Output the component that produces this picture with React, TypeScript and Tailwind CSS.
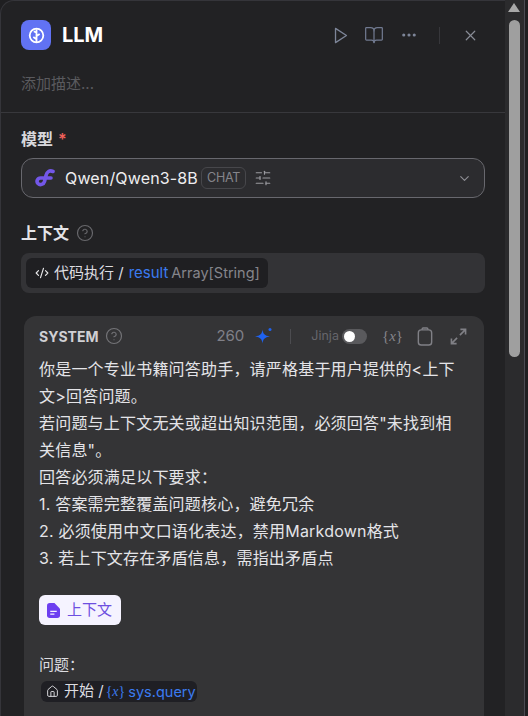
import React from "react";
import { BookOpen, Ellipsis, X, ChevronDown, SlidersHorizontal, CodeXml, House, CircleHelp } from "lucide-react";

const FONT = "font-['Inter','Noto_Sans_CJK_SC',sans-serif]";

function Help({ cls }: { cls: string }) {
  return <CircleHelp className={cls} strokeWidth={1.6} />;
}

function Sparkle() {
  return (
    <svg viewBox="0 0 18 18" className="h-[18px] w-[18px]" fill="#1f62f0">
      <path d="M7.5 2.5 C8 7 9.5 8.6 15 9.5 C9.5 10.4 8 12 7.5 16.5 C7 12 5.5 10.4 0 9.5 C5.5 8.6 7 7 7.5 2.5Z" />
      <circle cx="15" cy="2.5" r="1.5" />
    </svg>
  );
}

function VarIcon({ cls }: { cls: string }) {
  return (
    <span className={cls}>
      {"{"}
      <i>x</i>
      {"}"}
    </span>
  );
}

export default function App() {
  return (
    <div className={`flex h-[716px] w-[528px] overflow-hidden bg-[#1f1f21] ${FONT}`}>
      <div className="h-full w-[505px] shrink-0 overflow-hidden rounded-tl-[14px] border-l border-t border-[#35353a] bg-[#222224]">
        <div className="flex h-[68px] items-center pl-[20px] pr-[26px]">
          <div className="flex h-[30px] w-[30px] items-center justify-center rounded-[8px] bg-[#6172f3]">
            <svg viewBox="0 0 16 16" className="h-[17px] w-[17px]" fill="none" stroke="#fff" strokeWidth="1.7">
              <circle cx="8" cy="8" r="6.4" />
              <path d="M8 2v12M8 5.5 5.5 4M8 8.5 11 6.5M8 11.5 5 9.5" />
            </svg>
          </div>
          <div className="ml-[11px] text-[20px] font-bold text-white">LLM</div>
          <div className="ml-auto flex items-center text-[#7d8598]">
            <svg viewBox="0 0 14 18" className="h-[17px] w-[14px]" fill="none" stroke="currentColor" strokeWidth="1.4" strokeLinejoin="round">
              <path d="M1.2 1.5 12.8 9 1.2 16.5Z" />
            </svg>
            <BookOpen className="ml-[16px] h-[20px] w-[20px] text-[#70798f]" strokeWidth={1.5} />
            <Ellipsis className="ml-[16px] h-[18px] w-[18px]" strokeWidth={2.2} />
            <div className="ml-[21px] h-[17px] w-px bg-[#37373b]" />
            <X className="ml-[22px] h-[17px] w-[17px] text-[#888c96]" strokeWidth={1.7} />
          </div>
        </div>
        <div className="flex h-[43px] items-start pl-[20px] pt-[4px] text-[15px] leading-[22px] text-[#5a5a5e]">添加描述...</div>
        <div className="h-px bg-[#38383c]" />

        <div className="px-[20px]">
          <div className="mt-[15px] flex h-[22px] items-center text-[16px] font-semibold leading-[22px] text-[#d8d8dc]">
            模型 <span className="ml-[5px] text-[#f0605a]">*</span>
          </div>
          <div className="mt-[8px] flex h-[40px] w-[464px] items-center rounded-[12px] border border-[#68686e] bg-[#2c2c2f] pl-[13px] pr-[12px]">
            <svg viewBox="0 0 20 20" className="h-[20px] w-[20px]" fill="none" stroke="#7357e8" strokeWidth="3.6" strokeLinecap="round">
              <path d="M18 3.5c-3.5-1.5-6 0-7 4l-1.5 6c-.8 3-4.5 4-6.5 2s-.5-5.5 2.5-5.5H16" />
            </svg>
            <span className="ml-[10px] text-[16px] tracking-[0.15px] text-[#eeeef0]">Qwen/Qwen3-8B</span>
            <span className="ml-[3px] flex h-[22px] items-center rounded-[6px] border border-[#47474b] px-[5px] text-[12.5px] tracking-[-0.2px] text-[#85858b]">CHAT</span>
            <SlidersHorizontal className="ml-[8px] h-[18px] w-[18px] text-[#9a9aa0]" strokeWidth={1.6} />
            <ChevronDown className="ml-auto h-[15px] w-[15px] text-[#8f8f95]" strokeWidth={1.8} />
          </div>

          <div className="mt-[24px] flex h-[22px] items-center text-[16px] font-semibold leading-[22px] text-[#e4e4e8]">
            上下文
            <Help cls="ml-[7px] h-[18px] w-[18px] text-[#68686c]" />
          </div>
          <div className="mt-[9px] flex h-[40px] w-[464px] items-center rounded-[8px] bg-[#333336] px-[5px]">
            <div className="flex h-[30px] items-center rounded-[6px] bg-[#1f1f22] pl-[9px] pr-[8px] text-[15px]">
              <CodeXml className="h-[14px] w-[14px] text-[#e8e8ea]" strokeWidth={2} />
              <span className="ml-[5px] text-[#dcdce0]">代码执行 /</span>
              <span className="ml-[5px] text-[#3b7bf0]">result</span>
              <span className="ml-[3px] text-[14.5px] text-[#85858b]">Array[String]</span>
            </div>
          </div>

          <div className="ml-[3px] mt-[23px] h-[400px] w-[460px] rounded-t-[12px] bg-[#343436] pl-[15px] pr-[17px] pt-[6px]">
            <div className="flex h-[28px] items-center">
              <span className="text-[14px] font-bold text-[#d0d0d4]">SYSTEM</span>
              <Help cls="ml-[7px] h-[18px] w-[18px] text-[#737377]" />
              <span className="ml-auto text-[15px] text-[#808088]">260</span>
              <span className="ml-[11px]"><Sparkle /></span>
              <span className="ml-[17px] h-[15px] w-px bg-[#4c4c50]" />
              <span className="ml-[20px] text-[12.5px] text-[#66666c]">Jinja</span>
              <span className="ml-[3px] flex h-[15px] w-[25px] items-center rounded-full bg-[#5a5a5d] pl-[2px]">
                <span className="h-[11px] w-[11px] rounded-full bg-white" />
              </span>
              <VarIcon cls="ml-[15px] font-['Liberation_Serif',serif] text-[15px] text-[#85858b]" />
              <svg viewBox="0 0 16 20" className="ml-[14px] h-[19px] w-[16px] text-[#808086]" fill="none" stroke="currentColor" strokeWidth="1.5">
                <rect x="1" y="3" width="14" height="16" rx="3" />
                <path d="M5 3V2a1 1 0 0 1 1-1h4a1 1 0 0 1 1 1v1" />
              </svg>
              <svg viewBox="0 0 18 18" className="ml-[17px] h-[17px] w-[17px] text-[#808086]" fill="none" stroke="currentColor" strokeWidth="1.7">
                <path d="M11 1.5h5.5V7M16.5 1.5 10.5 7.5M1.5 11v5.5H7M1.5 16.5l6-6" />
              </svg>
            </div>
            <div className="mt-[6px] w-[424px] text-[16px] leading-[27px] tracking-[0.2px] text-[#e4e4e8]">
              <p>你是一个专业书籍问答助手，请严格基于用户提供的&lt;上下文&gt;回答问题。</p>
              <p>若问题与上下文无关或超出知识范围，必须回答"未找到相关信息"。</p>
              <p>回答必须满足以下要求：</p>
              <p>1. 答案需完整覆盖问题核心，避免冗余</p>
              <p>2. 必须使用中文口语化表达，禁用Markdown格式</p>
              <p>3. 若上下文存在矛盾信息，需指出矛盾点</p>
            </div>
            <div className="mt-[23px] flex h-[30px] w-[82px] items-center rounded-[6px] bg-[#f5f3ff] pl-[8px] text-[15px] text-[#6d4fe0]">
              <svg viewBox="0 0 14 16" className="h-[15px] w-[13px]">
                <path d="M3 0h5l6 6v7a3 3 0 0 1-3 3H3a3 3 0 0 1-3-3V3a3 3 0 0 1 3-3Z" fill="#6d3ff0" />
                <path d="M3.5 9h7M3.5 12h4.5" stroke="#f5f3ff" strokeWidth="1.4" />
              </svg>
              <span className="ml-[7px]">上下文</span>
            </div>
            <div className="mt-[28px] text-[15px] leading-[24px] text-[#dcdce0]">问题：</div>
            <div className="ml-[2px] mt-[4px] flex h-[21px] w-[156px] items-center rounded-[6px] bg-[#1f1f24] pl-[5px] text-[15px]">
              <House className="h-[13px] w-[13px] text-[#d8d8dc]" strokeWidth={1.8} />
              <span className="ml-[5px] text-[#dcdce0]">开始 /</span>
              <VarIcon cls="ml-[2px] font-['Liberation_Serif',serif] text-[14px] text-[#3b7bf0]" />
              <span className="ml-[3px] text-[14.5px] text-[#3b7bf0]">sys.query</span>
            </div>
          </div>
        </div>
      </div>

      <div className="flex h-full w-[19px] shrink-0 flex-col bg-[#2b2b2d] pl-[3px]">
        <div className="mt-[3px] h-0 w-0 border-x-[6px] border-b-[9px] border-x-transparent border-b-[#a8a8a8]" />
        <div className="ml-[1px] mt-[8px] h-[337px] w-[11px] rounded-full bg-[#9f9f9f]" />
      </div>
      <div className="h-full w-px shrink-0 bg-[#4a4a52]" />
      <div className="h-full flex-1 bg-[#1f1f21]" />
    </div>
  );
}
